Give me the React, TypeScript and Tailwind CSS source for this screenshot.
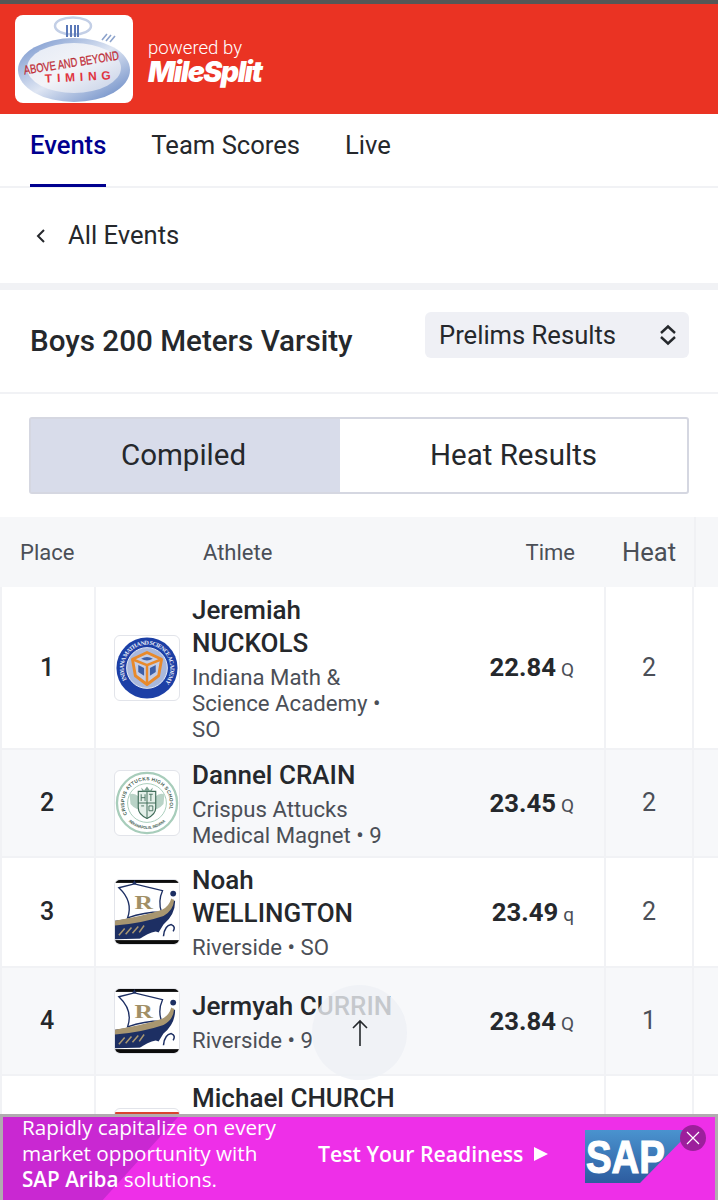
const rows = [
  { place: 1, name: ["Jeremiah", "NUCKOLS"], sub: ["Indiana Math &", "Science Academy •", "SO"], time: "22.84", q: "Q", heat: 2, logo: "imsa", h: "h-[163px]" },
  { place: 2, name: ["Dannel CRAIN"], sub: ["Crispus Attucks", "Medical Magnet • 9"], time: "23.45", q: "Q", heat: 2, logo: "crispus", h: "h-[108px]" },
  { place: 3, name: ["Noah", "WELLINGTON"], sub: ["Riverside • SO"], time: "23.49", q: "q", heat: 2, logo: "river", h: "h-[110px]" },
  { place: 4, name: ["Jermyah CURRIN"], sub: ["Riverside • 9"], time: "23.84", q: "Q", heat: 1, logo: "river", h: "h-[108px]" },
];

const ImsaLogo = () => (
  <svg viewBox="0 0 66 66" className="w-full h-full">
    <defs>
      <path id="imsa-ring" d="M12.2 45 A24 24 0 1 1 50 50" />
    </defs>
    <circle cx="33" cy="33" r="31.5" fill="#1c3fa6" />
    <circle cx="33" cy="33" r="21" fill="#a9b8dc" stroke="#e8ecf7" strokeWidth="1" />
    <text fontSize="6.2" fill="#e8ecf7" fontFamily="'Liberation Serif', serif" fontWeight="700">
      <textPath href="#imsa-ring" textLength="104" lengthAdjust="spacing">INDIANA MATH AND SCIENCE ACADEMY</textPath>
    </text>
    <path d="M33 17 L48 24 L45 41 L33 50 L21 41 L18 24 Z" fill="#c4cde6" stroke="#e88a2c" strokeWidth="3" strokeLinejoin="round" />
    <path d="M18 24 L33 30 L48 24 M33 30 V50" fill="none" stroke="#e88a2c" strokeWidth="2.6" />
    <path d="M24 30 L30 33 V41 L24 37 Z M42 30 L36 33 V41 L42 37 Z" fill="#3d5fa8" />
    <path d="M27 23.5 Q33 20 39 23.5 Q33 27 27 23.5 Z" fill="#3d5fa8" />
  </svg>
);

const CrispusLogo = () => (
  <svg viewBox="0 0 66 66" className="w-full h-full">
    <defs>
      <path id="crispus-top" d="M12.6 44.8 A23.5 23.5 0 1 1 53.4 44.8" />
      <path id="crispus-bottom" d="M14 52 A27 27 0 0 0 52 52" />
    </defs>
    <circle cx="33" cy="33" r="31" fill="#fff" stroke="#a8cdbb" strokeWidth="2.4" />
    <circle cx="33" cy="33" r="20" fill="#fff" stroke="#a8cdbb" strokeWidth="1" />
    <text fontSize="5" fill="#3d5a4e" fontWeight="700" fontFamily="'Liberation Sans', sans-serif">
      <textPath href="#crispus-top" textLength="92" lengthAdjust="spacing">CRISPUS ATTUCKS HIGH SCHOOL</textPath>
    </text>
    <text fontSize="4.2" fill="#3d5a4e" fontWeight="700" fontFamily="'Liberation Sans', sans-serif">
      <textPath href="#crispus-bottom" textLength="42" lengthAdjust="spacingAndGlyphs">INDIANAPOLIS, INDIANA</textPath>
    </text>
    <path d="M15 24 Q20 22 24 26 V40 Q19 38 16 34 Z M51 24 Q46 22 42 26 V40 Q47 38 50 34 Z" fill="#b9d3c7" />
    <path d="M24 21 H42 V38 Q42 45 33 49 Q24 45 24 38 Z" fill="#e4efe9" stroke="#3f6b58" strokeWidth="1.2" />
    <path d="M33 21 V49 M24 33 H42" stroke="#3f6b58" strokeWidth="1" />
    <path d="M27 17 L30 20 L33 16 L36 20 L39 17 L38 21 H28 Z" fill="#7ea493" />
    <path d="M27 24 V31 M31 24 V31 M27 27.5 H31 M35 24 H39 M37 24 V31 M27 36 H30 M35 36 H39 V41 H35 Z" stroke="#3f6b58" strokeWidth="0.9" fill="none" />
  </svg>
);

const RiverLogo = () => (
  <svg viewBox="0 0 66 66" className="w-full h-full">
    <rect width="66" height="66" fill="#fff" />
    <rect width="66" height="3" fill="#0c0c0c" />
    <rect y="62" width="66" height="4" fill="#0c0c0c" />
    <path d="M4 8 L20 4 L49 11 Q44 22 48 33 Q30 33 13 39 Q19 22 4 8 Z" fill="#fff" stroke="#1d2f63" strokeWidth="1.4" />
    <path d="M18 4 L20 0 L22 4" fill="#1d2f63" />
    <text x="20" y="30" fontSize="20" fontWeight="700" fill="#a18f66" fontFamily="'Liberation Serif', serif" textLength="19" lengthAdjust="spacingAndGlyphs">R</text>
    <path d="M0 42 Q30 38 48 34 Q58 30 60 20 L62 22 Q62 36 50 46 Q46 52 42 60 L0 61 Z" fill="#1d2f63" />
    <path d="M0 42 Q30 37 48 31 Q56 27 58 19 L61 21 Q60 32 50 37 Q30 44 0 47 Z" fill="#a89670" />
    <path d="M4 57 L10 50 M11 56 L17 49 M18 55 L24 48 M25 54 L30 47" stroke="#a89670" strokeWidth="1.6" />
    <path d="M24 62 Q34 54 42 53 Q50 55 56 62 Z" fill="#fff" />
    <path d="M50 58 Q51 47 58 46 Q63 48 60 53" fill="none" stroke="#1d2f63" strokeWidth="1.6" />
    <circle cx="60" cy="14" r="3" fill="#1d2f63" />
  </svg>
);

const logos: Record<string, () => React.JSX.Element> = { imsa: ImsaLogo, crispus: CrispusLogo, river: RiverLogo };

const TimingLogo = () => (
  <svg viewBox="0 0 118 88" className="w-full h-full">
    <defs>
      <linearGradient id="dial" x1="0" y1="0" x2="1" y2="1">
        <stop offset="0" stopColor="#e4eaf5" />
        <stop offset="0.5" stopColor="#f3f4f8" />
        <stop offset="1" stopColor="#c3cfe6" />
      </linearGradient>
      <linearGradient id="rim" x1="0" y1="0" x2="1" y2="1">
        <stop offset="0" stopColor="#6f8fca" />
        <stop offset="0.5" stopColor="#dfe6f3" />
        <stop offset="1" stopColor="#5b7fc0" />
      </linearGradient>
    </defs>
    <ellipse cx="58" cy="11" rx="18" ry="8.5" fill="none" stroke="#c3cfe6" strokeWidth="2.5" />
    <path d="M52 10 V22 M56 10 V22 M60 10 V22 M63 10 V22" stroke="#5a78b8" strokeWidth="2" />
    <path d="M87 25 L92 19 M91 26 L96 20 M95 27 L100 21" stroke="#8da3cc" strokeWidth="1.6" />
    <ellipse cx="59" cy="55" rx="56" ry="32" fill="url(#rim)" />
    <ellipse cx="59" cy="53" rx="47" ry="25" fill="url(#dial)" />
    <text x="57" y="52" transform="rotate(-9 57 52)" textAnchor="middle" fontSize="12.5" fill="#e0343f" stroke="#8f1f2a" strokeWidth="0.3" fontFamily="'Liberation Sans', sans-serif" textLength="96" lengthAdjust="spacingAndGlyphs">ABOVE AND BEYOND</text>
    <text x="63" y="66" transform="rotate(-3 63 66)" textAnchor="middle" fontSize="12" fontWeight="700" fill="#e0343f" fontFamily="'Liberation Sans', sans-serif" textLength="66" lengthAdjust="spacing">TIMING</text>
  </svg>
);

const SapLogo = () => (
  <svg viewBox="0 0 107 53" className="w-full h-full">
    <defs>
      <linearGradient id="sap" x1="0" y1="0" x2="0" y2="1">
        <stop offset="0" stopColor="#4a93cf" />
        <stop offset="1" stopColor="#2d5c9f" />
      </linearGradient>
    </defs>
    <path d="M0 0 H107 L55 53 H0 Z" fill="url(#sap)" />
    <text x="1" y="43" fontSize="46" fontWeight="700" fill="#fff" stroke="#fff" strokeWidth="1.2" fontFamily="'Liberation Sans', sans-serif" textLength="79" lengthAdjust="spacingAndGlyphs">SAP</text>
  </svg>
);

export default function App() {
  return (
    <div className="relative h-[1200px] overflow-hidden bg-white font-['Roboto',sans-serif] text-[#25282c]">
      <div className="h-1 bg-[#555756]" />
      <header className="h-[110px] bg-[#ea3323] flex items-center pl-[15px]">
        <div className="w-[118px] h-[88px] bg-white rounded-lg overflow-hidden">
          <TimingLogo />
        </div>
        <div className="ml-[15px] text-white mt-[6px]">
          <div className="text-[18.6px] leading-5 font-light">powered by</div>
          <div className="text-[28.5px] leading-7 font-black italic tracking-[-1.5px] font-['Inter',sans-serif]">MileSplit</div>
        </div>
      </header>

      <nav className="h-[74px] flex pl-[30px] gap-[45px] border-b-2 border-[#f1f2f5] text-[25.6px]">
        <div className="h-[73px] pt-[12px] border-b-[3px] border-[#00008f] text-[#00008f] font-medium">Events</div>
        <div className="pt-[12px]">Team Scores</div>
        <div className="pt-[12px]">Live</div>
      </nav>

      <div className="h-[95px] flex items-center pl-[33px] gap-[23px] text-[25.6px] border-b-[7px] border-[#f1f2f5] box-content">
        <svg viewBox="0 0 16 16" className="w-4 h-4" fill="none" stroke="#25282c" strokeWidth="2">
          <path d="M11 2 L5 8 L11 14" />
        </svg>
        <span className="-ml-1">All Events</span>
      </div>

      <div className="h-[104px] flex justify-between pl-[30px] pr-[29px] border-b-2 border-[#f1f2f5]">
        <h1 className="mt-[33px] text-[29.6px] leading-9 font-medium whitespace-nowrap">Boys 200 Meters Varsity</h1>
        <div className="mt-[22px] w-[264px] h-[46px] bg-[#eff0f5] rounded-md flex items-center justify-between pl-[14px] pr-[12px] text-[25.6px]">
          <span>Prelims Results</span>
          <svg viewBox="0 0 18 22" className="w-[18px] h-[22px]" fill="none" stroke="#25282c" strokeWidth="2.4">
            <path d="M2 9 L9 2.5 L16 9 M2 13 L9 19.5 L16 13" />
          </svg>
        </div>
      </div>

      <div className="px-[29px] pt-[23px] pb-[23px]">
        <div className="h-[77px] flex border-2 border-[#d5d7e1] rounded-[3px] text-[29.5px]">
          <div className="w-[309px] bg-[#d8dcea] flex items-center justify-center pr-[4px]">Compiled</div>
          <div className="flex-1 flex items-center justify-center">Heat Results</div>
        </div>
      </div>

      <div className="h-[70px] flex items-center bg-[#f6f7f9] text-[#4b4f57] text-[22px]">
        <div className="w-[96px] pl-5">Place</div>
        <div className="w-[510px] flex justify-between pl-[107px] pr-[31px]">
          <span>Athlete</span>
          <span>Time</span>
        </div>
        <div className="w-[88px] text-center text-[25.6px] pr-[2px]">Heat</div>
        <div className="flex-1 h-full border-l-2 border-[#f0f1f4]" />
      </div>

      {rows.map((row) => {
        const Logo = logos[row.logo];
        return (
          <div key={row.place} className={`flex border-b-2 border-[#f1f2f5] ${row.h} ${row.place % 2 === 0 ? "bg-[#f7f8fa]" : "bg-white"}`}>
            <div className="w-[96px] flex items-center justify-center pr-[2px] text-[25px] font-medium border-x-2 border-[#f1f2f5]">{row.place}</div>
            <div className="w-[510px] flex items-center border-r-2 border-[#f1f2f5]">
              <div className="ml-[18px] w-[66px] h-[66px] shrink-0 rounded-md border border-[#e2e4ea] overflow-hidden bg-white">
                <Logo />
              </div>
              <div className="ml-[12px] w-[208px]">
                {row.name.map((n) => (
                  <div key={n} className="text-[26px] leading-[33px] font-medium whitespace-nowrap">{n}</div>
                ))}
                <div className="mt-[4px]">
                  {row.sub.map((s) => (
                    <div key={s} className="text-[22.2px] leading-[26px] text-[#4b4f57] whitespace-nowrap">{s}</div>
                  ))}
                </div>
              </div>
              <div className="flex-1 text-right pr-[30px] whitespace-nowrap">
                <span className="text-[25.7px] font-bold">{row.time}</span>
                <span className="text-[19px] text-[#4b4f57] ml-[5px]">{row.q}</span>
              </div>
            </div>
            <div className="w-[88px] flex items-center justify-center text-[25px] text-[#4b4f57] border-r-2 border-[#f1f2f5]">{row.heat}</div>
          </div>
        );
      })}

      <div className="flex h-[120px]">
        <div className="w-[96px] border-x-2 border-[#f1f2f5]" />
        <div className="w-[510px] border-r-2 border-[#f1f2f5] flex">
          <div className="ml-[18px] mt-[32px] w-[66px] h-[20px] rounded-t-md border border-[#e2e4ea] overflow-hidden">
            <div className="h-[4px] mt-[3px] bg-[#d9432f]" />
          </div>
          <div className="ml-[12px] mt-[6px] text-[26px] leading-[33px] font-medium">Michael CHURCH</div>
        </div>
        <div className="w-[88px] border-r-2 border-[#f1f2f5]" />
      </div>

      {/* scroll to top button */}
      <div className="absolute left-[312px] top-[985px] w-[95px] h-[95px] rounded-full bg-[#eef0f5]/80 flex items-center justify-center">
        <svg viewBox="0 0 20 28" className="w-5 h-7" fill="none" stroke="#25282c" strokeWidth="1.6">
          <path d="M10 27 V2 M3 9 L10 2 L17 9" />
        </svg>
      </div>

      {/* ad banner */}
      <div className="absolute left-0 right-0 bottom-0 h-[86px] border-t-[3px] border-l-[3px] border-r-[3px] border-[#b1abb0] bg-[#ee2fe8] flex text-white font-['Open_Sans',sans-serif] overflow-hidden">
        <div className="absolute left-0 bottom-0 w-[175px] h-[83px] bg-[#c928d2] [clip-path:polygon(0_0,100%_0,57%_100%,0_100%)]" />
        <div className="relative ml-[19px] mt-[-3px] w-[292px] text-[20.7px] leading-[26px] font-medium whitespace-nowrap">
          <div>Rapidly capitalize on every</div>
          <div>market opportunity with</div>
          <div><b className="font-semibold">SAP Ariba</b> solutions.</div>
        </div>
        <div className="relative ml-[4px] mt-[24px] flex items-center h-[26px] text-[21.2px] font-semibold whitespace-nowrap">
          Test Your Readiness
          <svg viewBox="0 0 12 12" className="w-[14px] h-[14px] ml-[11px]" fill="#fff"><path d="M0 0 L12 6 L0 12 Z" /></svg>
        </div>
        <div className="absolute left-[582px] top-[13px] w-[107px] h-[53px]">
          <SapLogo />
        </div>
        <div className="absolute left-[677px] top-[8px] w-[26px] h-[26px] rounded-full bg-[#9c1f9c] flex items-center justify-center">
          <svg viewBox="0 0 14 14" className="w-[14px] h-[14px]" fill="none" stroke="#fff" strokeWidth="1.2"><path d="M1 1 L13 13 M13 1 L1 13" /></svg>
        </div>
      </div>
    </div>
  );
}
